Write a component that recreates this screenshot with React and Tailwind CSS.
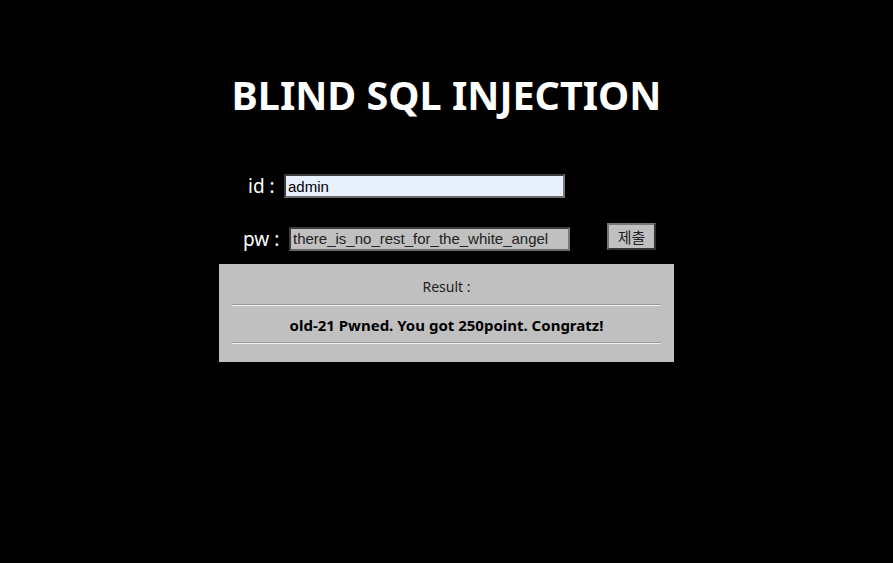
export default function App() {
  return (
    <div className="min-h-[563px] w-full bg-black font-['Noto_Sans',sans-serif]">
      <div className="flex flex-col items-center pt-[68px]">
        <h1 className="text-[39.5px] font-bold leading-[54px] text-white">BLIND SQL INJECTION</h1>
      </div>

      <div className="mx-auto mt-[50px] w-[455px]">
        <div className="flex items-center pl-[29px]">
          <span className="w-[36px] text-[19px] text-white">id :</span>
          <input
            readOnly
            value="admin"
            className="h-[24px] w-[281px] border-2 border-t-[#3c3c3c] border-l-[#3c3c3c] border-b-[#6a6a6a] border-r-[#7a7a7a] bg-[#e8f0fe] px-[2px] font-['Liberation_Sans',sans-serif] text-[15px] text-black outline-none"
          />
        </div>

        <div className="mt-[24px] flex items-center pl-[24px]">
          <span className="w-[46px] text-[19px] text-white">pw :</span>
          <input
            readOnly
            value="there_is_no_rest_for_the_white_angel"
            className="h-[24px] w-[281px] border-2 border-t-[#3c3c3c] border-l-[#3c3c3c] border-b-[#6a6a6a] border-r-[#7a7a7a] bg-[#c0c0c0] px-[2px] font-['Liberation_Sans',sans-serif] text-[15px] text-[#222] outline-none"
          />
          <button className="ml-[37px] mt-[-5px] h-[27px] w-[49px] border-2 border-t-[#777] border-l-[#777] border-b-[#333] border-r-[#333] bg-[#c0c0c0] font-['Noto_Sans_CJK_KR',sans-serif] text-[15px] leading-none text-[#222]">
            제출
          </button>
        </div>

        <div className="mt-[11px] flex h-[98px] flex-col items-center bg-[#c0c0c0] px-[13px] pt-[13px]">
          <div className="text-[14px] leading-[20px] text-[#222]">Result :</div>
          <div className="mt-[7px] h-[2px] w-full border-t border-t-[#999] border-b border-b-[#eee]" />
          <div className="mt-[9px] text-[15px] font-bold leading-[20px] text-black">
            old-21 Pwned. You got 250point. Congratz!
          </div>
          <div className="mt-[7px] h-[2px] w-full border-t border-t-[#999] border-b border-b-[#eee]" />
        </div>
      </div>
    </div>
  );
}
